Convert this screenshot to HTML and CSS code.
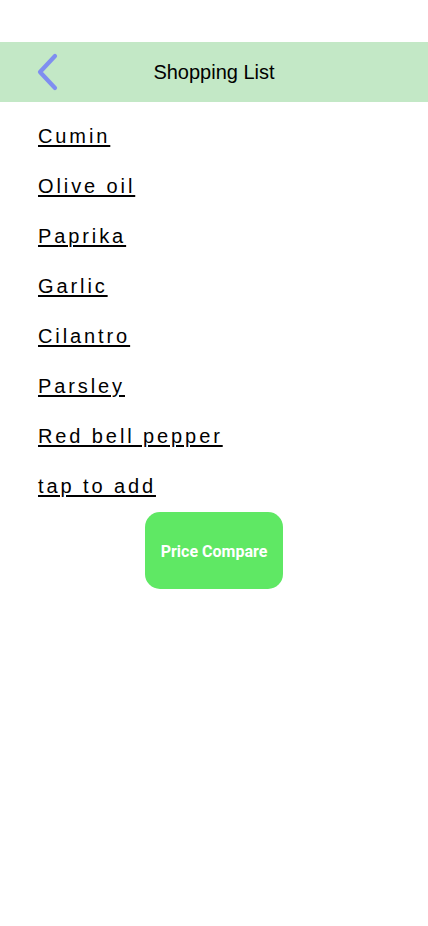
FILE: index.html
```html
<!DOCTYPE html>
<html lang="en">
<head>
<meta charset="utf-8">
<title>Shopping List</title>
<link rel="stylesheet" href="styles.css">
</head>
<body>
<div class="top-space"></div>
<header class="header">
  <button class="back" aria-label="Back">
    <svg width="24" height="38" viewBox="0 0 24 38">
      <path d="M19 3 L4 19 L19 35" fill="none" stroke="#7f8ef0" stroke-width="4.2" stroke-linecap="round" stroke-linejoin="round"/>
    </svg>
  </button>
  <h1 class="title">Shopping List</h1>
  <span></span>
</header>
<ul class="list">
  <li><a href="#">Cumin</a></li>
  <li><a href="#">Olive oil</a></li>
  <li><a href="#">Paprika</a></li>
  <li><a href="#">Garlic</a></li>
  <li><a href="#">Cilantro</a></li>
  <li><a href="#">Parsley</a></li>
  <li><a href="#">Red bell pepper</a></li>
  <li><a href="#">tap to add</a></li>
</ul>
<div class="actions">
  <button class="compare">Price Compare</button>
</div>
</body>
</html>
```

FILE: styles.css
```css
html, body {
  margin: 0;
  padding: 0;
  background: #ffffff;
}
body {
  font-family: "Liberation Sans", Arial, sans-serif;
  color: #000;
}
.top-space {
  height: 42px;
}
.header {
  height: 60px;
  background: #c3e8c6;
  display: grid;
  grid-template-columns: 1fr auto 1fr;
  align-items: center;
}
.back {
  justify-self: start;
  margin-left: 36px;
  padding: 0;
  border: 0;
  background: none;
  display: flex;
  align-items: center;
}
.back svg {
  display: block;
}
.title {
  margin: 0;
  font-size: 20px;
  font-weight: 400;
  line-height: 24px;
}
.list {
  list-style: none;
  margin: 0;
  padding: 9px 0 1px 38px;
}
.list li {
  height: 50px;
  line-height: 50px;
  font-size: 20px;
  letter-spacing: 2.9px;
}
.list a {
  color: #000;
  text-decoration: underline;
  text-underline-offset: 2px;
}
.actions {
  display: flex;
  justify-content: center;
}
.compare {
  width: 138px;
  height: 77px;
  border: 0;
  border-radius: 15px;
  background: #5fe864;
  color: #ffffff;
  font-family: Roboto, "Liberation Sans", sans-serif;
  font-weight: 700;
  font-size: 16px;
  padding: 2px 0 0;
}
```
